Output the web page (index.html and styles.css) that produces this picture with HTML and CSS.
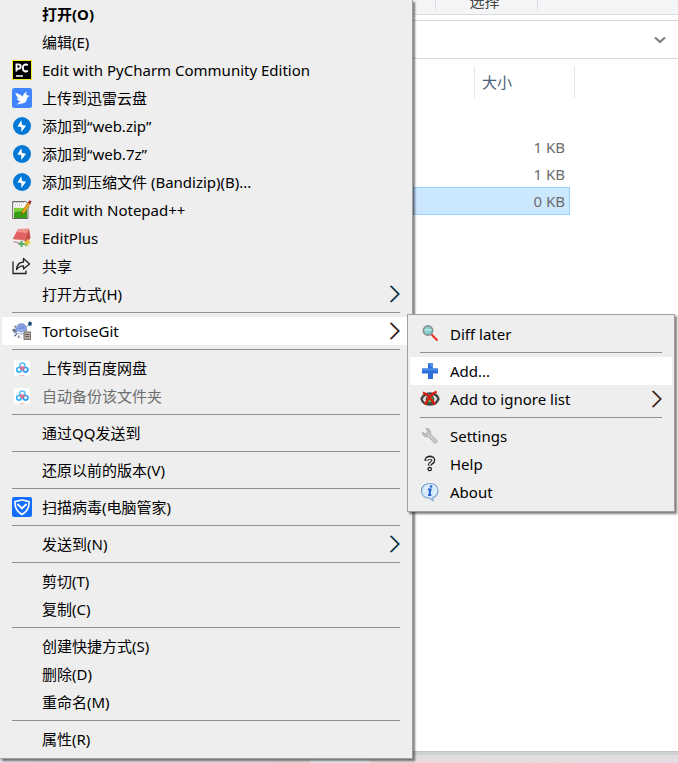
FILE: index.html
```html
<!DOCTYPE html>
<html lang="zh-CN">
<head>
<meta charset="utf-8">
<meta name="viewport" content="width=device-width, initial-scale=1">
<title>web</title>
<link rel="stylesheet" href="styles.css">
</head>
<body>
<svg class="defs" aria-hidden="true">
  <symbol id="bandizip" viewBox="0 0 20 20"><circle cx="10" cy="10" r="9" fill="#0078d7"/><path d="M9.300 4.200 5.400 10.600 9.300 11v5l4.800-6.300-4-.6z" fill="#fff"/></symbol>
  <symbol id="baidu" viewBox="0 0 20 20"><rect x="2" y="2" width="16" height="16" rx="3" fill="#fff"/><g fill="none" stroke-width="1.700"><circle cx="10.300" cy="7.600" r="2.600" stroke="#5cc3f8"/><circle cx="7" cy="11.800" r="2.300" stroke="#35b4fb"/><circle cx="13.600" cy="11.800" r="2.300" stroke="#2a9df8"/><path d="M8.300 9.700c1-1 2.900-1 3.900 0L10.300 12z" stroke="#f2647c" stroke-width="1.300"/></g><path d="M7.500 17.500h5" stroke="#f7b8c2"/></symbol>
  <symbol id="chevron" viewBox="0 0 12 20"><g fill="none" stroke-width="1.200"><path d="m2 2 8 8-8 8" stroke="#f0a850"/><path d="m3.400 2 8 8-8 8" stroke="#4aa8f0"/><path d="m2.700 2 8 8-8 8" stroke="currentColor"/></g></symbol>
</svg>

<main class="window">
  <div class="ribbon"><span class="ribbon-group">选择</span></div>
  <div class="address"><button class="expand" aria-label="展开"><svg viewBox="0 0 12 8"><path d="m1 1.500 5 4.500 5-4.500" fill="none" stroke="#808080" stroke-width="2.200"/></svg></button></div>
  <table class="files">
    <colgroup><col class="type"><col><col class="gutter"></colgroup>
    <thead><tr><th></th><th colspan="2">大小</th></tr></thead>
    <tbody>
      <tr><td colspan="2">1 KB</td></tr>
      <tr><td colspan="2">1 KB</td></tr>
      <tr class="selected"><td colspan="2">0 KB</td></tr>
    </tbody>
  </table>
</main>

<div class="menu context" role="menu">
  <button class="item default" role="menuitem"><span class="label">打开(O)</span></button>
  <button class="item" role="menuitem"><span class="label">编辑(E)</span></button>
  <button class="item" role="menuitem">
    <svg class="icon" viewBox="0 0 20 20"><path d="M.5.500h19v19H.5z" fill="#000" stroke="#f4ee2a"/><path d="M4 16h7" stroke="#fff" stroke-width="1.500"/><g fill="none" stroke="#fff" stroke-width="1.900"><path d="M4.500 11.500V4.400h2a2 2 0 0 1 0 4.300h-2"/><path d="M15.800 5.300c-1.700-1.500-5-1.200-5 2.700 0 3.700 3.300 4.100 5 2.500"/></g></svg>
    <span class="label">Edit with PyCharm Community Edition</span></button>
  <button class="item" role="menuitem">
    <svg class="icon" viewBox="0 0 20 20"><rect width="20" height="20" rx="2.500" fill="#3f85ff"/><path d="M3.500 5c2.800.5 5 1.700 7 3.600.8-2 2.200-4.200 4.200-5.100-.5 1.500-.3 2.500-.2 3.500l3.500 1c-2 .5-2.800 1.300-3 3-.4 2.800-2.300 4.200-4.600 4.500-2 .2-3.700.2-5.400 1.500.8-2 2-3 3.700-3.500C6.500 13 5 11.600 4.700 10.200c.8.400 1.600.5 2.400.4C5.300 9.300 3.900 7.500 3.500 5z" fill="#fff"/></svg>
    <span class="label">上传到迅雷云盘</span></button>
  <button class="item" role="menuitem"><svg class="icon"><use href="#bandizip"/></svg><span class="label">添加到“web.zip”</span></button>
  <button class="item" role="menuitem"><svg class="icon"><use href="#bandizip"/></svg><span class="label">添加到“web.7z”</span></button>
  <button class="item" role="menuitem"><svg class="icon"><use href="#bandizip"/></svg><span class="label">添加到压缩文件 (Bandizip)(B)...</span></button>
  <button class="item" role="menuitem">
    <svg class="icon" viewBox="0 0 20 20"><path d="M.7 1.500h13l2.300 2v15H.7z" fill="#f7f7f7" stroke="#666"/><path d="M2 8c4-1 8 1 13-1v11H2z" fill="#7cd136"/><path d="M2 13c4-3 8 0 13-3v8H2z" fill="#379d12"/><path d="M3 5h8" stroke="#aaa" stroke-dasharray="1 1"/><path d="M2 1v2m3-2v2m3-2v2m3-2v2" stroke="#777"/><path d="m9.500 14.500 1-3.500L16 2.500l2.300 1.300-5.800 8.700z" fill="#f4aa22" stroke="#a8680b" stroke-width=".7"/><path d="m16 2.400 1.300-2L19.500 1l-1.200 3z" fill="#a01427"/><path d="m9.500 14.500.4-1.500 1 .6z" fill="#222"/></svg>
    <span class="label">Edit with Notepad++</span></button>
  <button class="item" role="menuitem">
    <svg class="icon" viewBox="0 0 20 20"><path d="M6 1 17 .8 12.500 12 .8 11z" fill="#e2605f"/><path d="M6 1 17 .8 15.300 5 4.500 4z" fill="#f0938a"/><path d="M.8 11 12.500 12 17 .8l1.500 8.700-4 7z" fill="#c84a4b"/><path d="m1 11.300 11.600 1.200 1.400 3.700L2.300 14z" fill="#f2f2f2"/><path d="m1 13 12 2.200 1 1.300L2.300 14.800z" fill="#c9a0a0"/><path d="M9.500 13v6m-3-3h6" stroke="#55b06a" stroke-width="2"/><path d="M15.500 11.500v6m-3-3h6" stroke="#e9cb3a" stroke-width="2"/><path d="M14 15.500v3m-1.500-1.500h3" stroke="#79bd4b"/></svg>
    <span class="label">EditPlus</span></button>
  <button class="item" role="menuitem">
    <svg class="icon" viewBox="0 0 20 20"><path d="M1 5.500v12h13v-3" fill="none" stroke="#222" stroke-width="1.300"/><path d="M4.500 13.500c.3-4.700 2.500-7.200 7-7.500V2.500l6 5.500-6 5V9.800c-3.500 0-5 1-7 3.700z" fill="none" stroke="#222" stroke-width="1.300" stroke-linejoin="round"/></svg>
    <span class="label">共享</span></button>
  <button class="item" role="menuitem" aria-haspopup="menu"><span class="label">打开方式(H)</span><svg class="arrow cool"><use href="#chevron"/></svg></button>
  <hr>
  <button class="item active" role="menuitem" aria-haspopup="menu" aria-expanded="true">
    <svg class="icon" viewBox="0 0 20 20"><path d="M0 8.500 3 7.500l2.500 3.300-2.500 1.700-2-1.500z" fill="#8795a5"/><path d="M1 8.500 3.500 10" stroke="#3c4a5c"/><path d="m5 12.500-2.500 2.800M7 14.500l-1 2.500M4 6.500 2.500 5" stroke="#5b6f86" stroke-width="1.300"/><path d="M4 9.500C4 5 6 2.800 9.500 2.800S14.500 5.200 14.500 9c0 2.600-2.200 4-5 4s-5.500-1-5.500-3.500z" fill="#8fabea" stroke="#5f74b0" stroke-width=".7"/><path d="M6.500 5c2 1.500 4.500 1.500 6.500.5M5 8c3-1.300 6-1.300 9 .5M9 3.500 8.500 8m3-4 .5 4" stroke="#7088cb" stroke-width=".7" fill="none"/><path d="M5 11c2 1.300 6 1.300 8.500 0" stroke="#eef4ff" stroke-width="1.500" fill="none"/><path d="m14 6.500 3-3.500" stroke="#8ba0b5"/><ellipse cx="18" cy="2.700" rx="1.800" ry="2.300" fill="#194a70"/><path d="M12 11h6.500v7.500H12z" fill="#b2aaa2" stroke="#777069"/><path d="M13.500 13.500h3.500m-3.500 2H17" stroke="#5a534d" stroke-width=".9"/><path d="M5 16.500h4" stroke="#b0c0d0"/></svg>
    <span class="label">TortoiseGit</span><svg class="arrow warm"><use href="#chevron"/></svg></button>
  <hr>
  <button class="item" role="menuitem"><svg class="icon"><use href="#baidu"/></svg><span class="label">上传到百度网盘</span></button>
  <button class="item" role="menuitem" disabled><svg class="icon"><use href="#baidu"/></svg><span class="label">自动备份该文件夹</span></button>
  <hr>
  <button class="item" role="menuitem"><span class="label">通过QQ发送到</span></button>
  <hr>
  <button class="item" role="menuitem"><span class="label">还原以前的版本(V)</span></button>
  <hr>
  <button class="item" role="menuitem">
    <svg class="icon" viewBox="0 0 20 20"><rect width="20" height="20" rx="2" fill="#146eff"/><path d="M3 4.500c2.500 0 4.500-1.500 7-1.500s4.500 1.500 7 1.500c.3 6-2.300 10.500-7 13C5.300 15 2.700 10.500 3 4.500z" fill="none" stroke="#fff" stroke-width="1.600"/><path d="m5.500 7 4.500 4.500L14.500 7" fill="none" stroke="#fff" stroke-width="1.800"/></svg>
    <span class="label">扫描病毒(电脑管家)</span></button>
  <hr>
  <button class="item" role="menuitem" aria-haspopup="menu"><span class="label">发送到(N)</span><svg class="arrow cool"><use href="#chevron"/></svg></button>
  <hr>
  <button class="item" role="menuitem"><span class="label">剪切(T)</span></button>
  <button class="item" role="menuitem"><span class="label">复制(C)</span></button>
  <hr>
  <button class="item" role="menuitem"><span class="label">创建快捷方式(S)</span></button>
  <button class="item" role="menuitem"><span class="label">删除(D)</span></button>
  <button class="item" role="menuitem"><span class="label">重命名(M)</span></button>
  <hr>
  <button class="item" role="menuitem"><span class="label">属性(R)</span></button>
</div>

<div class="menu submenu" role="menu" aria-label="TortoiseGit">
  <button class="item" role="menuitem">
    <svg class="icon" viewBox="0 0 20 20"><path d="m11.500 10.500 6 6" stroke="#e8352b" stroke-width="2.200"/><circle cx="8" cy="6.500" r="4.600" fill="#86cfcb" stroke="#83908f" stroke-width="1.600"/><path d="M4.500 6h7" stroke="#c5eeea" stroke-width="1.400"/></svg>
    <span class="label">Diff later</span></button>
  <hr>
  <button class="item active" role="menuitem">
    <svg class="icon" viewBox="0 0 20 20"><path d="M8 2h5v5.500h5v5h-5V18H8v-5.500H2v-5h6z" fill="#2d6fd9"/><path d="M8 2h5v5.500H2v2h16v-2h-5" fill="#4b8cea"/></svg>
    <span class="label">Add...</span></button>
  <button class="item" role="menuitem" aria-haspopup="menu">
    <svg class="icon" viewBox="0 0 20 20"><path d="M1.500 10C3 6 6 4.500 10 4.500s7.500 1.500 8.500 5.500c-1.500 4-4.500 5.500-8.500 5.500S2.500 14 1.500 10z" fill="#ddd" stroke="#444" stroke-width="2.300"/><circle cx="10" cy="10.500" r="3.800" fill="#44ac51" stroke="#333"/><path d="M3 3.500C8 5.500 11 10 15 15.500M16.500 2.500C11 5 8 10 5 15.500" fill="none" stroke="#e2190f" stroke-width="2.400"/></svg>
    <span class="label">Add to ignore list</span><svg class="arrow warm"><use href="#chevron"/></svg></button>
  <hr>
  <button class="item" role="menuitem">
    <svg class="icon" viewBox="0 0 20 20"><path d="M6 2.500C9.500 2 11.500 5 10.500 8l6.500 6.500c.8 1.500-1 3.200-2.500 2.500L8 10.500C5 11.500 2 9.500 2.500 6l3 2 2.300-2.200z" fill="#c0c0c0" stroke="#a2a2a2" stroke-width=".7"/><path d="m8.500 8.500 7 7" stroke="#ddd"/></svg>
    <span class="label">Settings</span></button>
  <button class="item" role="menuitem">
    <svg class="icon" viewBox="0 0 20 20"><path d="M6.500 6.800c-.6-4 6.800-4.500 6.800-.6 0 2.800-3.600 2.500-3.600 5.300" fill="none" stroke="#222" stroke-width="4"/><path d="M6.500 6.300c.2-3 6.800-3 6.800 0 0 2.500-3.600 2.300-3.600 4.700" fill="none" stroke="#f4f4f4" stroke-width="1.500"/><circle cx="9.700" cy="15" r="1.700" fill="#eee" stroke="#222" stroke-width="1.300"/></svg>
    <span class="label">Help</span></button>
  <button class="item" role="menuitem">
    <svg class="icon" viewBox="0 0 20 20"><path d="M10 1.500c5 0 8 3 8 7.200 0 3.300-1.800 5.800-5 6.900v2.900L9.500 16C4.500 16 1.500 13 1.500 8.700S5 1.500 10 1.500z" fill="#d9ebfc" stroke="#7ba3cf" stroke-width="1.200"/><path d="M8 7.500h2.500L9.300 13h2" fill="none" stroke="#2361c9" stroke-width="2"/><circle cx="11" cy="4.500" r="1.300" fill="#2361c9"/></svg>
    <span class="label">About</span></button>
</div>
</body>
</html>
```

FILE: styles.css
```css
* { box-sizing: border-box; }

body {
  margin: 0;
  min-height: 100vh;
  display: flex;
  overflow: hidden;
  font-family: "Noto Sans", "Noto Sans CJK SC", sans-serif;
  font-size: 15px;
  line-height: 20px;
  color: #000;
  background: linear-gradient(90deg, #e8dce8, #e8dadd 310px, #eeecec 310px, #eeecec 371px, #ecdadd 371px, #e5d9da 80%, #e5dae5);
}

.defs { position: absolute; width: 0; height: 0; }

button { font: inherit; color: inherit; border: 0; background: none; padding: 0; }

/* Explorer window behind the menus */
.window {
  flex: 1;
  margin-bottom: 12px;
  padding-left: 413px;
  background: #fff;
  box-shadow: 0 1px 0 #bfc3c1, 0 4px 0 #d0d2d1, 0 8px 0 #dedede;
}

.ribbon {
  display: flex;
  align-items: flex-end;
  height: 15px;
  padding: 0 0 3px 22px;
  overflow: hidden;
  background: #f4f5f7;
  border-bottom: 1px solid #d9dadc;
  color: #444;
}

.ribbon-group {
  width: 103px;
  padding-right: 4px;
  text-align: center;
  border: solid #dcdde0;
  border-width: 0 1px;
}

.address {
  display: flex;
  align-items: center;
  justify-content: flex-end;
  height: 39px;
  margin-top: 5px;
  padding-right: 12px;
  border: solid #d9d9d9;
  border-width: 1px 0;
}

.expand { display: flex; }
.expand svg { width: 12px; height: 8px; }

.files {
  width: 162px;
  margin-top: 7px;
  border-collapse: separate;
  border-spacing: 0;
  table-layout: fixed;
  color: #6d6d6d;
}

.files .type { width: 62px; }
.files .gutter { width: 5px; }

.files th {
  height: 32px;
  padding: 0 7px;
  border-right: 1px solid #e5e5e5;
  font-weight: 400;
  text-align: left;
  color: #4c607a;
}

.files tbody::before { content: ""; display: block; height: 35px; }

.files td {
  height: 27px;
  padding: 0 5px 0 0;
  text-align: right;
}

.files .selected td {
  height: 28px;
  background: #cce8ff;
  box-shadow: inset 0 0 0 1px #99d1ff;
}

/* Menus */
.menu {
  position: absolute;
  display: flex;
  flex-direction: column;
  background: #eee;
  border: 1px solid #a0a0a0;
  box-shadow: 2px 2px 2px rgba(0, 0, 0, .5);
}

.context {
  top: 0;
  left: 0;
  width: 413px;
  padding: 0 2px 5px;
  border-width: 0 1px 1px 0;
}

.submenu {
  top: 314px;
  left: 407px;
  width: 268px;
  padding: 5px 2px;
}

.item {
  display: grid;
  grid-template-columns: 20px 1fr 12px;
  column-gap: 10px;
  align-items: center;
  height: 28px;
  padding: 0 10px;
  text-align: left;
}

.item.active { background: #fff; }
.item.default { font-weight: 700; }
.item:disabled { color: #6d6d6d; }

.icon { grid-column: 1; width: 20px; height: 20px; }
.label { grid-column: 2; grid-row: 1; white-space: nowrap; }
.arrow { grid-column: 3; width: 12px; height: 20px; }
.cool { color: #052840; }
.warm { color: #400a08; }

.menu hr {
  align-self: stretch;
  height: 1px;
  margin: 4px 10px;
  border: 0;
  background: #919191;
}
```
